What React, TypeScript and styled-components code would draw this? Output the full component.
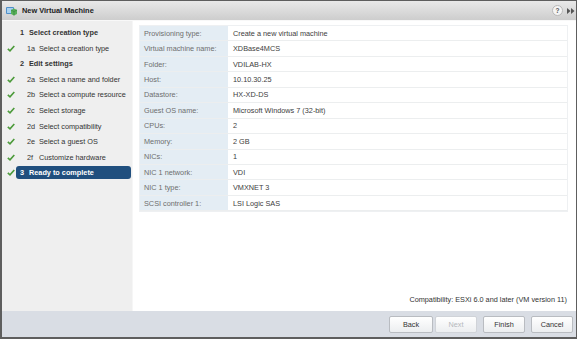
import styled, { createGlobalStyle } from 'styled-components';

const GlobalStyle = createGlobalStyle`
    html, body {
        margin: 0;
        padding: 0;
        background: #fff;
    }
    body {
        font-family: "Liberation Sans", Arial, sans-serif;
        font-size: 7.3px;
    }
`;

const Window = styled.div`
    width: 577px;
    height: 339px;
    box-sizing: border-box;
    border: 1px solid #5e5e5e;
    border-left-width: 2px;
    border-bottom-width: 2px;
    display: flex;
    flex-direction: column;
    background: #fff;
`;

const TitleBar = styled.div`
    height: 19px;
    flex-shrink: 0;
    display: flex;
    align-items: center;
    padding: 0 1px 0 3px;
    background: linear-gradient(#e9e9e9, #cdcdcd);
    border-bottom: 1px solid #f8f8f8;

    .title{
        margin-left: 5px;
        font-weight: bold;
        font-size: 7.4px;
        color: #222;
        flex: 1;
    }
`;

const HelpIcon = styled.div`
    width: 9px;
    height: 9px;
    border-radius: 50%;
    background: #f4f4f4;
    border: 1px solid #b8b8b8;
    color: #555;
    font-size: 6.5px;
    font-weight: bold;
    display: flex;
    align-items: center;
    justify-content: center;
    margin-right: 4px;
`;

const Body = styled.div`
    flex: 1;
    display: flex;
    min-height: 0;
`;

const Sidebar = styled.div`
    width: 131px;
    flex-shrink: 0;
    background: #efefef;
    border-right: 1px solid #f6f6f6;
    padding-top: 4px;
    box-sizing: border-box;
`;

const Step = styled.div<{ $sub?: boolean; $selected?: boolean }>`
    height: 15.55px;
    display: flex;
    align-items: center;
    color: #333;
    font-weight: ${props => props.$sub ? 'normal' : 'bold'};

    .check{
        width: 14px;
        flex-shrink: 0;
        display: flex;
        justify-content: center;
        padding-left: 3px;
        box-sizing: border-box;
    }

    .label{
        display: flex;
        align-items: center;
        height: 13px;
        margin-left: ${props => props.$sub ? '7px' : '0'};
        padding: 0 4px;
        border-radius: 3px;
        flex: ${props => props.$selected ? '1' : 'none'};
        margin-right: ${props => props.$selected ? '1px' : '0'};
        background: ${props => props.$selected ? '#204f7e' : 'transparent'};
        color: ${props => props.$selected ? '#fff' : 'inherit'};
    }

    .num{
        width: ${props => props.$sub ? '12px' : '9px'};
    }
`;

const Content = styled.div`
    flex: 1;
    display: flex;
    flex-direction: column;
    padding: 4px 8px 7px 6px;
`;

const Table = styled.div`
    border: 1px solid #eef0f2;
    display: grid;
    grid-template-columns: 88px 1fr;
`;

const Cell = styled.div<{ $label?: boolean }>`
    height: 14.45px;
    display: flex;
    align-items: center;
    padding-left: ${props => props.$label ? '4px' : '5px'};
    background: ${props => props.$label ? '#e4edf4' : '#fff'};
    color: ${props => props.$label ? '#6e6e6e' : '#404040'};
    border-bottom: 1px solid #eceeef;
`;

const Compat = styled.div`
    margin-top: auto;
    text-align: right;
    color: #333;
    padding-right: 1px;
`;

const Footer = styled.div`
    height: 26px;
    flex-shrink: 0;
    background: #d9dde4;
    display: flex;
    align-items: center;
    justify-content: flex-end;
    padding-right: 3px;
    box-sizing: border-box;
`;

const Button = styled.div<{ $disabled?: boolean; $gap?: number }>`
    width: 42px;
    height: 17px;
    box-sizing: border-box;
    margin-left: ${props => props.$gap ?? 6}px;
    border: 1px solid ${props => props.$disabled ? '#d0d3d8' : '#b9bcc1'};
    border-radius: 2px;
    background: linear-gradient(#ffffff, #eceef0);
    color: ${props => props.$disabled ? '#b5b8bd' : '#333'};
    display: flex;
    align-items: center;
    justify-content: center;
`;

const steps = [
    { num: '1', text: 'Select creation type' },
    { num: '1a', text: 'Select a creation type', sub: true, done: true },
    { num: '2', text: 'Edit settings' },
    { num: '2a', text: 'Select a name and folder', sub: true, done: true },
    { num: '2b', text: 'Select a compute resource', sub: true, done: true },
    { num: '2c', text: 'Select storage', sub: true, done: true },
    { num: '2d', text: 'Select compatibility', sub: true, done: true },
    { num: '2e', text: 'Select a guest OS', sub: true, done: true },
    { num: '2f', text: 'Customize hardware', sub: true, done: true },
    { num: '3', text: 'Ready to complete', done: true, selected: true },
];

const rows: [string, string][] = [
    ['Provisioning type:', 'Create a new virtual machine'],
    ['Virtual machine name:', 'XDBase4MCS'],
    ['Folder:', 'VDILAB-HX'],
    ['Host:', '10.10.30.25'],
    ['Datastore:', 'HX-XD-DS'],
    ['Guest OS name:', 'Microsoft Windows 7 (32-bit)'],
    ['CPUs:', '2'],
    ['Memory:', '2 GB'],
    ['NICs:', '1'],
    ['NIC 1 network:', 'VDI'],
    ['NIC 1 type:', 'VMXNET 3'],
    ['SCSI controller 1:', 'LSI Logic SAS'],
];

function Check() {
    return (
        <svg width="8" height="7" viewBox="0 0 8 7">
            <path d="M0.8 3.8 L3 5.8 L7.3 1" fill="none" stroke="#4c9a3a" strokeWidth="1.6" />
        </svg>
    );
}

function VmIcon() {
    return (
        <svg width="12" height="12" viewBox="0 0 12 12">
            <rect x="1" y="2" width="8" height="7" rx="1" fill="#4f8fc9" />
            <rect x="2" y="3" width="6" height="5" fill="#a9d1f0" />
            <path d="M6 5 L9 3.5 L12 5 L12 9 L9 10.5 L6 9 Z" fill="#58b05a" />
            <path d="M6 5 L9 6.5 L12 5 M9 6.5 L9 10.5" fill="none" stroke="#2f7d36" strokeWidth="0.6" />
        </svg>
    );
}

function ForwardIcon() {
    return (
        <svg width="8" height="6" viewBox="0 0 8 6">
            <path d="M0 0 L3.5 3 L0 6 Z M4 0 L7.5 3 L4 6 Z" fill="#555" />
        </svg>
    );
}

export default function App() {
    return (
        <>
            <GlobalStyle />
            <Window>
                <TitleBar>
                    <VmIcon />
                    <div className="title">New Virtual Machine</div>
                    <HelpIcon>?</HelpIcon>
                    <ForwardIcon />
                </TitleBar>

                <Body>
                    <Sidebar>
                        {
                            steps.map( (step, index) => (
                                <Step key={index} $sub={step.sub} $selected={step.selected}>
                                    <div className="check">{step.done && <Check />}</div>
                                    <div className="label">
                                        <span className="num">{step.num}</span>
                                        <span>{step.text}</span>
                                    </div>
                                </Step>
                            ))
                        }
                    </Sidebar>

                    <Content>
                        <Table>
                            {
                                rows.map( ([label, value], index) => (
                                    <div key={index} style={{ display: 'contents' }}>
                                        <Cell $label>{label}</Cell>
                                        <Cell>{value}</Cell>
                                    </div>
                                ))
                            }
                        </Table>
                        <Compat>Compatibility: ESXi 6.0 and later (VM version 11)</Compat>
                    </Content>
                </Body>

                <Footer>
                    <Button $gap={0} style={{ width: 44 }}>Back</Button>
                    <Button $disabled $gap={2}>Next</Button>
                    <Button>Finish</Button>
                    <Button>Cancel</Button>
                </Footer>
            </Window>
        </>
    );
}
